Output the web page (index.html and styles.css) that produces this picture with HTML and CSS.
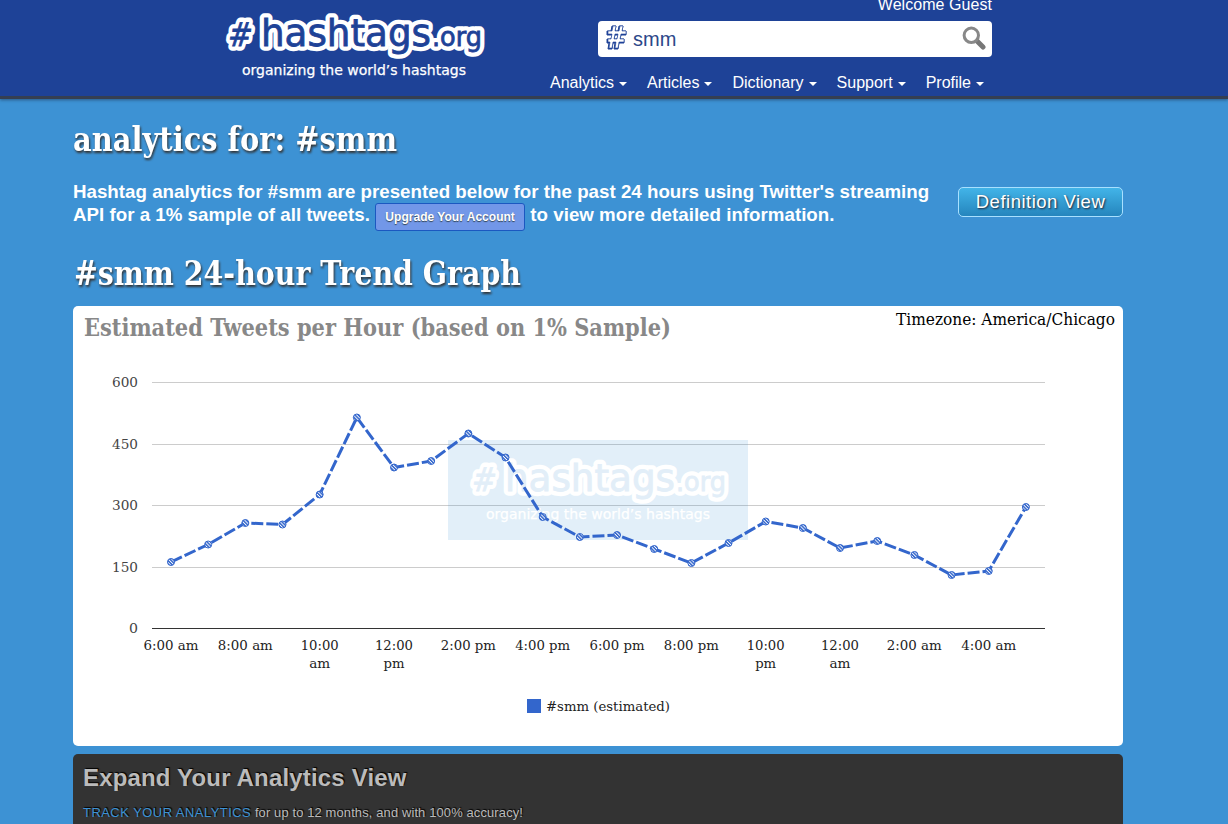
FILE: index.html
```html
<!DOCTYPE html>
<html lang="en">
<head>
<meta charset="utf-8">
<title>Analytics for #smm</title>
<link rel="stylesheet" href="styles.css">
</head>
<body>
<header class="topbar">
  <svg class="logo" width="300" height="96" viewBox="0 0 300 96">
    <defs>
      <g id="word" class="logo-word">
        <text x="17" y="46" font-size="33" transform="translate(5 0) skewX(-6)" textLength="24" lengthAdjust="spacingAndGlyphs">#</text>
        <text x="51" y="46" font-size="38" textLength="170" lengthAdjust="spacingAndGlyphs">hashtags</text>
        <text x="222" y="46" font-size="26" textLength="50" lengthAdjust="spacingAndGlyphs">.org</text>
      </g>
    </defs>
    <use href="#word" class="outline"/>
    <use href="#word" class="face"/>
    <text class="logo-tag" x="32" y="75" textLength="224" lengthAdjust="spacingAndGlyphs">organizing the world’s hashtags</text>
  </svg>
  <div class="top-right">
    <div class="welcome">Welcome Guest</div>
    <div class="search">
      <svg class="hash" width="21" height="26" viewBox="0 0 21 26"><path class="hash-side" d="M6 1h4l-1 5h3l1-5h4l-1 5h4v4h-5l-1 4h4v4h-5l-1 6h-4l1-6H7l-1 6H2l1-6H1v-4h4l1-4H1V6h4zM9 10l-1 4h3l1-4z"/><path class="hash-face" d="M7 1h3l-1 5h4l1-5h3l-1 5h4v3h-5l-1 5h4v3h-5l-1 6h-3l1-6H7l-1 6H3l1-6H2v-3h3l1-5H2V6h4zM9 9l-1 5h3l1-5z"/></svg>
      <span class="query">smm</span>
      <svg class="lens" width="24" height="24" viewBox="0 0 24 24"><path class="handle" d="M15 15l6 6"/><circle cx="9.3" cy="9.3" r="7.2"/></svg>
    </div>
    <nav class="menu">
      <a>Analytics<i></i></a><a>Articles<i></i></a><a>Dictionary<i></i></a><a>Support<i></i></a><a>Profile<i></i></a>
    </nav>
  </div>
</header>
<main class="page">
  <svg class="heading" width="460" height="54"><text x="0" y="41" textLength="324" lengthAdjust="spacingAndGlyphs">analytics for: #smm</text></svg>
  <section class="intro">
    <p>Hashtag analytics for #smm are presented below for the past 24 hours using Twitter's streaming<br>API for a 1% sample of all tweets. <a class="upgrade">Upgrade Your Account</a> to view more detailed information.</p>
    <a class="definition">Definition View</a>
  </section>
  <svg class="heading" width="460" height="54"><text x="1" y="41" textLength="447" lengthAdjust="spacingAndGlyphs">#smm 24-hour Trend Graph</text></svg>
  <section class="chart-card">
    <svg id="chart" width="1050" height="440" viewBox="73 306 1050 440">
      <defs>
        <pattern id="hatch" width="2.4" height="2.4" patternUnits="userSpaceOnUse" patternTransform="rotate(-45)"><rect width="2.4" height="2.4" fill="#fff"/><rect width="1.5" height="2.4" fill="#3366cc"/></pattern>
      </defs>
      <text class="chart-title" x="84" y="336" textLength="587" lengthAdjust="spacingAndGlyphs">Estimated Tweets per Hour (based on 1% Sample)</text>
      <text class="zone" x="896" y="325" textLength="219" lengthAdjust="spacingAndGlyphs">Timezone: America/Chicago</text>
      <g id="plot"></g>
      <rect x="527" y="699" width="14" height="14" fill="#3366cc"/>
      <text class="axis" x="546" y="711" textLength="124" lengthAdjust="spacingAndGlyphs">#smm (estimated)</text>
      <rect x="448" y="440" width="300" height="100" fill="#3d92d4" opacity=".15"/>
      <g class="watermark" transform="translate(454 445)">
        <use href="#word" class="outline"/>
        <use href="#word" class="face"/>
        <text class="logo-tag" x="32" y="74" textLength="224" lengthAdjust="spacingAndGlyphs">organizing the world’s hashtags</text>
      </g>
      <g id="series"></g>
    </svg>
  </section>
  <section class="expand">
    <h2>Expand Your Analytics View</h2>
    <p><a>TRACK YOUR ANALYTICS</a> for up to 12 months, and with 100% accuracy!</p>
  </section>
</main>
<script src="chart.js"></script>
</body>
</html>
```
FILE: styles.css
```css
body { margin: 0; background: #3d92d4; font-family: "Liberation Sans", Arial, sans-serif; height: 824px; overflow: hidden; }
.topbar { height: 96px; background: #1e4297; border-bottom: 3px solid #353f52; box-shadow: 0 1px 3px rgba(30,50,80,.6); display: flex; overflow: hidden; }
.logo { margin-left: 210px; flex: none; }
.logo-word text { font-family: "DejaVu Sans", Verdana, sans-serif; }
.outline { fill: #fff; stroke: #fff; stroke-width: 9.5px; stroke-linejoin: round; }
.face { fill: #1e4297; stroke: #1e4297; stroke-width: .8px; }
.logo-tag { font: 14px "DejaVu Sans", Verdana, sans-serif; fill: #fff; stroke: #fff; stroke-width: .25px; }
.top-right { width: 482px; color: #fff; font-size: 16px; display: flex; flex-direction: column; align-items: flex-end; }
.welcome { line-height: 18px; margin-top: -4px; height: 25px; letter-spacing: .05px; }
.search { box-sizing: border-box; width: 394px; height: 36px; background: #fff; border-radius: 4px; display: flex; align-items: center; padding: 0 5px 0 8px; }
.hash { margin-top: -3px; }
.hash-side { fill: #1e4297; stroke: #1e4297; stroke-width: 1; }
.hash-face { fill: #fff; stroke: #1e4297; stroke-width: .6; }
.query { color: #2c4789; font-size: 20px; margin-left: 6px; flex: 1; }
.lens { fill: #fff; stroke: #888; stroke-width: 3; margin-top: -3px; margin-right: 1px; }
.lens .handle { stroke-width: 5; stroke: #777; stroke-linecap: round; }
.menu { display: flex; gap: 20px; padding: 16px 8px 0 0; line-height: 20px; }
.menu a { display: flex; align-items: center; }
.menu i { border: 4px solid transparent; border-top-color: #fff; border-bottom: 0; margin: 2px 0 0 5px; }
.page { width: 1050px; margin-left: 73px; padding-top: 11px; }
.heading { display: block; overflow: visible; }
.heading text { font: bold 33px "DejaVu Serif", serif; fill: #fff; filter: drop-shadow(1px 2px 1px #333); }
.intro { height: 80px; padding-top: 16px; box-sizing: border-box; display: flex; justify-content: space-between; align-items: flex-start; color: #fff; }
.intro p { margin: 0; font-weight: bold; font-size: 18.72px; line-height: 23px; letter-spacing: .02px; white-space: nowrap; }
.upgrade { display: inline-block; vertical-align: 0; width: 148px; height: 26px; line-height: 26px; margin: -9px 0; border: 1px solid #1b58c0; border-radius: 3px; background: #7297e8; text-align: center; font-size: 12px; text-shadow: 0 1px 1px #345; }
.definition { box-sizing: border-box; width: 165px; height: 30px; margin-top: 7px; border: 1px solid #a8e0ff; border-radius: 5px; background: linear-gradient(#42b4e8, #2585bd); text-align: center; font-size: 18.5px; line-height: 28px; letter-spacing: .5px; text-shadow: 1px 1px 2px #223; }
.chart-card { background: #fff; border-radius: 5px; height: 440px; margin-top: 8px; }
.chart-card svg { display: block; }
.chart-title { font: bold 24px "DejaVu Serif", serif; fill: #888; }
.zone { font: 16px "DejaVu Serif", serif; fill: #000; }
.axis { font: 13.5px "DejaVu Serif", serif; fill: #222; }
.value { fill: #444; text-anchor: end; }
.time { text-anchor: middle; }
.watermark .face { fill: #e2eef8; stroke: #e2eef8; }
.expand { box-sizing: border-box; margin-top: 8px; height: 70px; background: #333; border-radius: 5px 5px 0 0; padding: 9px 10px 0; color: #bbb; text-shadow: 1px -1px 1px #000; }
.expand h2 { margin: 0; font-size: 24px; line-height: 30px; letter-spacing: .17px; }
.expand p { margin: 12px 0 0; font-size: 13px; line-height: 16px; letter-spacing: .1px; }
.expand p a { color: #3d92d4; letter-spacing: .45px; }
```
FILE: chart.js
```js
const plot = document.getElementById('plot');
const series = document.getElementById('series');
function add(parent, tag, attrs, text) {
  const el = document.createElementNS('http://www.w3.org/2000/svg', tag);
  for (const k in attrs) el.setAttribute(k, attrs[k]);
  if (text) el.textContent = text;
  parent.appendChild(el);
}
[[600, 382.5], [450, 444.5], [300, 505.5], [150, 567.5], [0, 628.5]].forEach(([v, y]) => {
  add(plot, 'path', { d: `M152 ${y}H1045`, stroke: v ? '#ccc' : '#333' });
  const w = v ? 26 : 9;
  add(plot, 'text', { class: 'axis value', x: 138, y: y + 4.5, textLength: w, lengthAdjust: 'spacingAndGlyphs' }, String(v));
});
['6:00 am', '8:00 am', '10:00 am', '12:00 pm', '2:00 pm', '4:00 pm', '6:00 pm', '8:00 pm', '10:00 pm', '12:00 am', '2:00 am', '4:00 am'].forEach((t, i) => {
  const x = 171 + i * 74.33;
  const rows = t.length > 7 ? t.split(' ') : [t];
  rows.forEach((r, j) => add(plot, 'text', { class: 'axis time', x, y: 650 + j * 18, textLength: rows.length === 1 ? 55 : j ? 21 : 38, lengthAdjust: 'spacingAndGlyphs' }, r));
});
const ys = [562, 544.5, 523, 524.5, 494.5, 417.5, 467.5, 461, 433.5, 457.5, 517, 537, 535, 549, 563, 543, 521.5, 528, 548, 541, 555, 575, 571, 507];
const pts = ys.map((y, i) => [171 + i * 37.17, y]);
add(series, 'polyline', { points: pts.join(' '), fill: 'none', stroke: '#3366cc', 'stroke-width': 3, 'stroke-dasharray': '12 3' });
pts.forEach(([cx, cy]) => add(series, 'circle', { cx, cy, r: 3.5, fill: 'url(#hatch)', stroke: '#3366cc' }));
```
